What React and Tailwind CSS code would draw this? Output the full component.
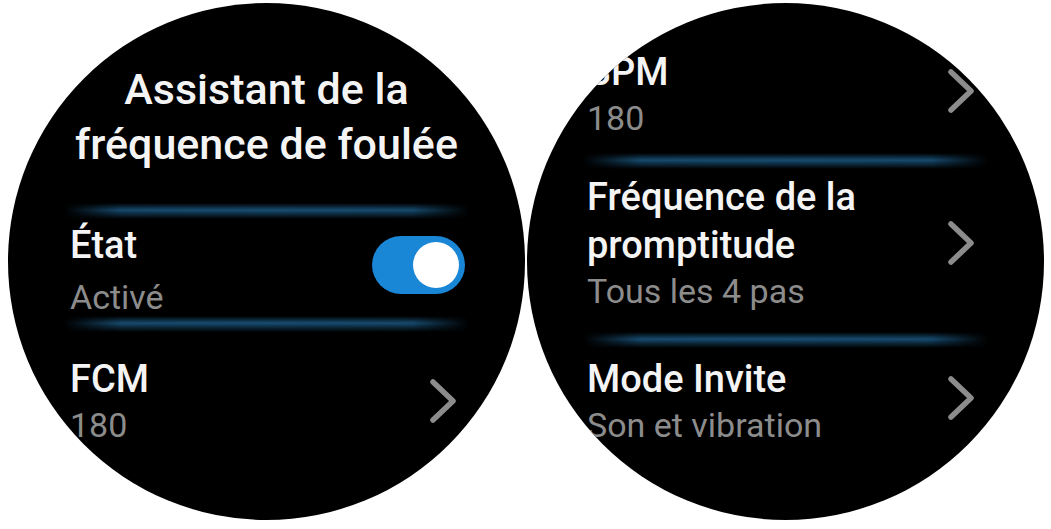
const font = "font-['Roboto','Noto_Sans',sans-serif]";

function Chevron({ className = "" }) {
    return (
        <svg width="30" height="48" viewBox="0 0 30 48" className={`shrink-0 ${className}`}>
            <polyline
                points="5,5 25,24 5,43"
                fill="none"
                stroke="#8c8c8c"
                strokeWidth="5.5"
                strokeLinecap="round"
                strokeLinejoin="round"
            />
        </svg>
    );
}

function Divider({ className = "" }) {
    return (
        <div className={`flex h-[16px] items-center justify-center ${className}`}>
            <div className="h-[16px] w-[405px] bg-[linear-gradient(to_right,transparent_0%,#1a5780_14%,#1b5b86_50%,#1a5780_86%,transparent_100%)] [mask-image:linear-gradient(to_bottom,transparent_0%,rgba(0,0,0,0.85)_45%,rgba(0,0,0,0.6)_60%,transparent_100%)]" />
        </div>
    );
}

function Label({ children }) {
    return <div className="text-[38px] font-medium leading-[48px] text-[#f4f4f4]">{children}</div>;
}

function Sub({ children }) {
    return <div className="whitespace-nowrap text-[34px] leading-[44px] text-[#8c8c8c]">{children}</div>;
}

function Toggle() {
    return (
        <div className="mt-[15px] flex h-[58px] w-[93px] shrink-0 items-center justify-end self-start rounded-full bg-[#1a86d6] pr-[6px]">
            <div className="h-[46px] w-[46px] rounded-full bg-white" />
        </div>
    );
}

function Watch({ children }) {
    return (
        <div className={`flex h-[517px] w-[517px] shrink-0 flex-col overflow-hidden rounded-full bg-black ${font}`}>
            {children}
        </div>
    );
}

export default function App() {
    return (
        <div className="flex h-[529px] w-[1051px] items-start gap-[2px] overflow-hidden bg-white pl-[8px] pt-[3px]">
            <Watch>
                <div className="mt-[59px] text-center text-[43px] font-medium leading-[55px] text-[#f4f4f4]">
                    <div>Assistant de la</div>
                    <div>fréquence de foulée</div>
                </div>
                <Divider className="mt-[31px]" />
                <div className="mt-[2px] flex items-center justify-between pl-[62px] pr-[60px]">
                    <div>
                        <Label>État</Label>
                        <div className="mt-[6px]">
                            <Sub>Activé</Sub>
                        </div>
                    </div>
                    <Toggle />
                </div>
                <Divider className="-mt-[3px]" />
                <div className="mt-[23px] flex items-center justify-between pl-[62px] pr-[67px]">
                    <div>
                        <Label>FCM</Label>
                        <Sub>180</Sub>
                    </div>
                    <Chevron />
                </div>
            </Watch>

            <Watch>
                <div className="mt-[45px] flex items-center justify-between pl-[60px] pr-[68px]">
                    <div>
                        <Label>BPM</Label>
                        <Sub>180</Sub>
                    </div>
                    <Chevron className="mb-[7px]" />
                </div>
                <Divider className="mt-[13px]" />
                <div className="mt-[4px] flex items-center justify-between pl-[60px] pr-[68px]">
                    <div>
                        <Label>Fréquence de la</Label>
                        <Label>promptitude</Label>
                        <Sub>Tous les 4 pas</Sub>
                    </div>
                    <Chevron />
                </div>
                <Divider className="mt-[19px]" />
                <div className="mt-[7px] flex items-center justify-between pl-[60px] pr-[68px]">
                    <div>
                        <Label>Mode Invite</Label>
                        <Sub>Son et vibration</Sub>
                    </div>
                    <Chevron className="mb-[7px]" />
                </div>
            </Watch>
        </div>
    );
}
